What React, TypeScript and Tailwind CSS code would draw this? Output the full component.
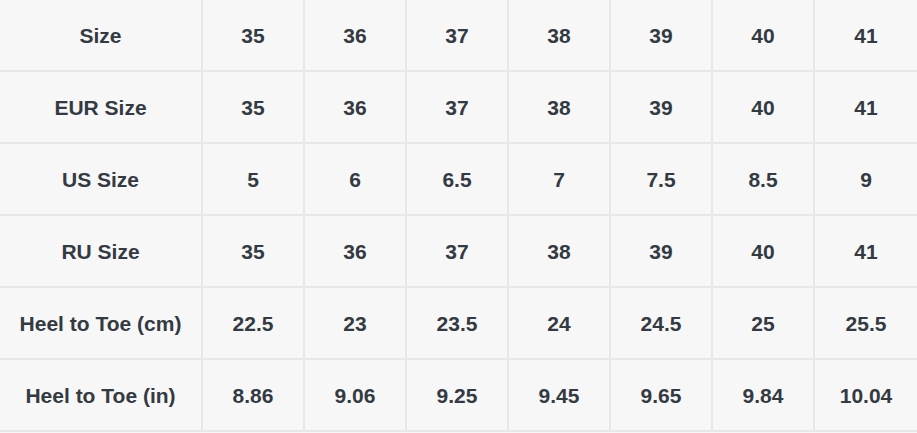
const rows: string[][] = [
  ["Size", "35", "36", "37", "38", "39", "40", "41"],
  ["EUR Size", "35", "36", "37", "38", "39", "40", "41"],
  ["US Size", "5", "6", "6.5", "7", "7.5", "8.5", "9"],
  ["RU Size", "35", "36", "37", "38", "39", "40", "41"],
  ["Heel to Toe (cm)", "22.5", "23", "23.5", "24", "24.5", "25", "25.5"],
  ["Heel to Toe (in)", "8.86", "9.06", "9.25", "9.45", "9.65", "9.84", "10.04"],
];

export default function App() {
  return (
    <div className="w-[917px] h-[433px] overflow-hidden bg-[#f7f7f7] font-['Liberation_Sans',Arial,sans-serif]">
      <div className="grid grid-cols-[201px_repeat(6,100px)_102px] auto-rows-[70px] gap-[2px] bg-[#e8e8e8] pb-[2px]">
        {rows.map((row, i) =>
          row.map((cell, j) => (
            <div
              key={`${i}-${j}`}
              className="flex items-center justify-center bg-[#f7f7f7] pt-[2px] text-[21px] font-bold text-[#343a42]"
            >
              {cell}
            </div>
          ))
        )}
      </div>
    </div>
  );
}
